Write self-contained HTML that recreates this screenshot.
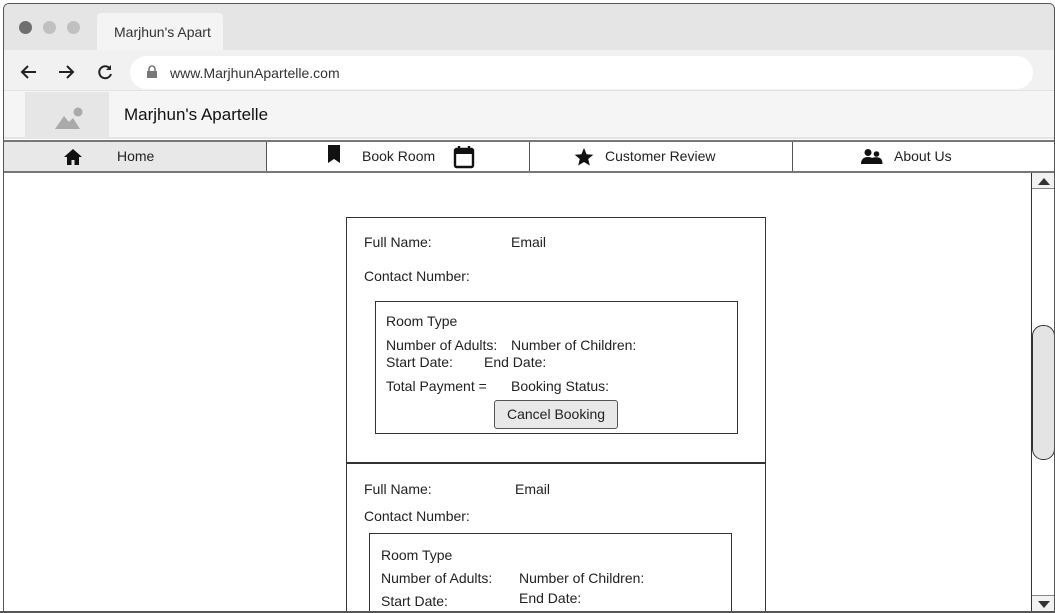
<!DOCTYPE html>
<html style="width:1055px;height:613px;overflow:hidden"><head><meta charset="utf-8"><style>
*{margin:0;padding:0;box-sizing:border-box}
body{width:1055px;height:613px;background:#fff;font-family:"Liberation Sans",Arial,sans-serif;color:#222;position:relative;overflow:hidden}
.a{position:absolute}
.t{position:absolute;font-size:14px;white-space:nowrap;line-height:16px}
</style></head><body>
<div class="a" style="left:3px;top:3px;width:1052px;height:609px;border:1px solid #555;border-radius:6px 6px 0 0;background:#fff;overflow:hidden">
 <div class="a" style="left:0;top:0;width:1052px;height:46px;background:#e5e5e5"></div>
 <div class="a" style="left:15px;top:17px;width:13px;height:13px;border-radius:50%;background:#6f6f6f"></div>
 <div class="a" style="left:39px;top:17px;width:13px;height:13px;border-radius:50%;background:#c0c0c0"></div>
 <div class="a" style="left:63px;top:17px;width:13px;height:13px;border-radius:50%;background:#c0c0c0"></div>
 <div class="a" style="left:93px;top:9px;width:126px;height:37px;background:#f4f4f4;border-radius:4px 4px 0 0"></div>
 <div class="t" style="left:110px;top:20px;color:#333">Marjhun's Apart</div>
 <div class="a" style="left:0;top:46px;width:1052px;height:41px;background:#f1f1f1;border-bottom:1px solid #e2e2e2"></div>
 <div class="a" style="left:126px;top:52px;width:903px;height:33px;background:#fff;border-radius:17px"></div>
 <svg class="a" style="left:15px;top:59px" width="20" height="18" viewBox="0 0 20 18"><path d="M17 9H3M9 3L3 9l6 6" stroke="#222" stroke-width="2" fill="none"/></svg>
 <svg class="a" style="left:52px;top:59px" width="20" height="18" viewBox="0 0 20 18"><path d="M3 9h14M11 3l6 6-6 6" stroke="#222" stroke-width="2" fill="none"/></svg>
 <svg class="a" style="left:92px;top:59px" width="18" height="18" viewBox="0 0 18 18"><path d="M14 5.5A6 6 0 1 0 15 11" stroke="#222" stroke-width="2" fill="none"/><path d="M15 2v5h-5z" fill="#222"/></svg>
 <svg class="a" style="left:142px;top:61px" width="12" height="14" viewBox="0 0 12 14"><path d="M3 6V4a3 3 0 0 1 6 0v2" stroke="#777" stroke-width="1.6" fill="none"/><rect x="1" y="6" width="10" height="7" fill="#777"/></svg>
 <div class="t" style="left:166px;top:61px;color:#333">www.MarjhunApartelle.com</div>
 <div class="a" style="left:0;top:87px;width:1052px;height:48px;background:#f5f5f5;border-bottom:2px solid #e4e4e4"></div>
 <div class="a" style="left:21px;top:88px;width:84px;height:46px;background:#e6e6e6"></div>
 <svg class="a" style="left:48px;top:99px" width="34" height="28" viewBox="0 0 34 28"><path d="M3 26L12 13l5 6 4-4 7 11z" fill="#aaa"/><circle cx="26" cy="9" r="4.5" fill="#aaa"/></svg>
 <div class="t" style="left:120px;top:101px;font-size:17px;line-height:20px;color:#111">Marjhun's Apartelle</div>
 <div class="a" style="left:0;top:136px;width:1052px;height:33px;border-top:2px solid #777;border-bottom:2px solid #777"></div>
 <div class="a" style="left:0;top:138px;width:262px;height:29px;background:#e8e8e8"></div>
 <div class="a" style="left:262px;top:138px;width:1px;height:29px;background:#555"></div>
 <div class="a" style="left:525px;top:138px;width:1px;height:29px;background:#555"></div>
 <div class="a" style="left:788px;top:138px;width:1px;height:29px;background:#555"></div>
 <svg class="a" style="left:59px;top:144px" width="20" height="18" viewBox="0 0 20 18"><path d="M10 1L1 9h3v8h4.5v-5h3v5H16V9h3z" fill="#111"/></svg>
 <div class="t" style="left:113px;top:144px">Home</div>
 <svg class="a" style="left:322px;top:140px" width="16" height="20" viewBox="0 0 16 20"><path d="M2 1h12v18l-6-4-6 4z" fill="#111"/></svg>
 <div class="t" style="left:358px;top:144px">Book Room</div>
 <svg class="a" style="left:449px;top:141px" width="22" height="24" viewBox="0 0 22 24"><rect x="2" y="4" width="18" height="18" rx="1.5" stroke="#111" stroke-width="2.4" fill="none"/><rect x="2" y="4" width="18" height="5" fill="#111"/><path d="M6 1v4M16 1v4" stroke="#111" stroke-width="2.4"/></svg>
 <svg class="a" style="left:570px;top:143px" width="20" height="20" viewBox="0 0 20 20"><path d="M10 1l2.6 6.2 6.7.5-5.1 4.3 1.6 6.5L10 15l-5.8 3.5 1.6-6.5L.7 7.7l6.7-.5z" fill="#111"/></svg>
 <div class="t" style="left:601px;top:144px">Customer Review</div>
 <svg class="a" style="left:857px;top:144px" width="22" height="17" viewBox="0 0 22 17"><circle cx="7" cy="4.5" r="3.5" fill="#111"/><circle cx="15.5" cy="6" r="2.8" fill="#111"/><path d="M0 16c0-5 3-7 7-7s7 2 7 7zM13 16c0-3-1-5-2-6 1-.5 3-.7 4.5-.7 4 0 6 2 6 6.7z" fill="#111"/></svg>
 <div class="t" style="left:890px;top:144px">About Us</div>
 <div class="a" style="left:1027px;top:169px;width:24px;height:440px;border-left:1px solid #333;background:#fff"></div>
 <div class="a" style="left:1028px;top:169px;width:23px;height:16px;border-bottom:1px solid #888;background:#f2f2f2"></div>
 <div class="a" style="left:1034px;top:174px;width:0;height:0;border-left:6px solid transparent;border-right:6px solid transparent;border-bottom:7px solid #333"></div>
 <div class="a" style="left:1028px;top:321px;width:23px;height:135px;border:1px solid #333;border-radius:11px;background:#e4e4e4"></div>
 <div class="a" style="left:1028px;top:591px;width:23px;height:17px;border-top:1px solid #888;background:#f2f2f2"></div>
 <div class="a" style="left:1034px;top:597px;width:0;height:0;border-left:6px solid transparent;border-right:6px solid transparent;border-top:7px solid #333"></div>
</div>
<div class="a" style="left:346px;top:217px;width:420px;height:247px;border:1px solid #333;border-bottom:2px solid #333"></div>
<div class="t" style="left:364px;top:234px">Full Name:</div>
<div class="t" style="left:511px;top:234px">Email</div>
<div class="t" style="left:364px;top:268px">Contact Number:</div>
<div class="a" style="left:375px;top:301px;width:363px;height:133px;border:1px solid #333"></div>
<div class="t" style="left:386px;top:313px">Room Type</div>
<div class="t" style="left:386px;top:337px">Number of Adults:</div>
<div class="t" style="left:511px;top:337px">Number of Children:</div>
<div class="t" style="left:386px;top:354px">Start Date:</div>
<div class="t" style="left:484px;top:354px">End Date:</div>
<div class="t" style="left:386px;top:378px">Total Payment =</div>
<div class="t" style="left:511px;top:378px">Booking Status:</div>
<div class="a" style="left:494px;top:400px;width:124px;height:29px;border:1px solid #555;border-radius:3px;background:#e8e8e8;font-size:14px;text-align:center;line-height:27px">Cancel Booking</div>
<div class="a" style="left:346px;top:463px;width:420px;height:150px;border:1px solid #333;border-bottom:none"></div>
<div class="t" style="left:364px;top:481px">Full Name:</div>
<div class="t" style="left:515px;top:481px">Email</div>
<div class="t" style="left:364px;top:508px">Contact Number:</div>
<div class="a" style="left:369px;top:533px;width:363px;height:80px;border:1px solid #333;border-bottom:none"></div>
<div class="t" style="left:381px;top:547px">Room Type</div>
<div class="t" style="left:381px;top:570px">Number of Adults:</div>
<div class="t" style="left:519px;top:570px">Number of Children:</div>
<div class="t" style="left:381px;top:593px">Start Date:</div>
<div class="t" style="left:519px;top:590px">End Date:</div>
<div class="a" style="left:0;top:611px;width:1055px;height:2px;background:#555"></div>
</body></html>
